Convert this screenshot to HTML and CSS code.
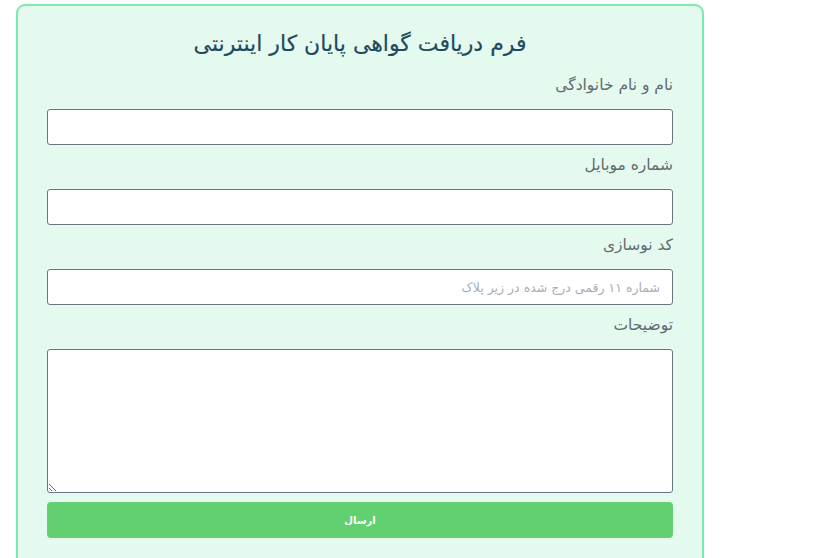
FILE: index.html
```html
<!DOCTYPE html>
<html lang="fa" dir="rtl">
<head>
<meta charset="utf-8">
<title>فرم دریافت گواهی پایان کار اینترنتی</title>
<link rel="stylesheet" href="styles.css">
</head>
<body>
<div class="page">
  <form class="card">
    <h1 class="title">فرم دریافت گواهی پایان کار اینترنتی</h1>
    <label class="label" for="name">نام و نام خانوادگی</label>
    <input class="field" id="name" type="text">
    <label class="label" for="mobile">شماره موبایل</label>
    <input class="field" id="mobile" type="text">
    <label class="label" for="code">کد نوسازی</label>
    <input class="field" id="code" type="text" placeholder="شماره ۱۱ رقمی درج شده در زیر پلاک">
    <label class="label" for="desc">توضیحات</label>
    <textarea class="field area" id="desc"></textarea>
    <button class="submit" type="button">ارسال</button>
  </form>
</div>
</body>
</html>
```

FILE: styles.css
```css
html, body {
  margin: 0;
  padding: 0;
  background: #ffffff;
}
body {
  font-family: "DejaVu Sans", sans-serif;
}
.page {
  display: flex;
  justify-content: flex-start;
  direction: ltr;
  padding: 4px 0 0 16px;
}
.card {
  direction: rtl;
  box-sizing: border-box;
  width: 688px;
  height: 580px;
  background: #e4faef;
  border: 2px solid #7ce9b3;
  border-radius: 9px;
  padding: 0 29px;
  display: flex;
  flex-direction: column;
}
.title {
  margin: 23px 0 0;
  font-size: 22px;
  font-weight: normal;
  line-height: 30px;
  text-align: center;
  color: #1f4a5e;
  -webkit-text-stroke: 0.2px #1f4a5e;
}
.label {
  font-size: 15.5px;
  line-height: 24px;
  color: #626a70;
  margin: 8px 0 12px;
}
.title + .label {
  margin-top: 14px;
}
.field {
  box-sizing: border-box;
  height: 36px;
  width: 100%;
  border: 1px solid #6b7480;
  border-radius: 3px;
  background: #ffffff;
  font-family: "DejaVu Sans", sans-serif;
  font-size: 12.5px;
  padding: 0 12px;
  margin: 0;
}
.field::placeholder {
  color: #a9adb0;
}
.area {
  height: 144px;
  resize: vertical;
}
.submit {
  margin-top: 9px;
  height: 36px;
  border: none;
  border-radius: 4px;
  background: #62d070;
  color: #ffffff;
  font-family: "DejaVu Sans", sans-serif;
  font-weight: bold;
  font-size: 10px;
}
```
